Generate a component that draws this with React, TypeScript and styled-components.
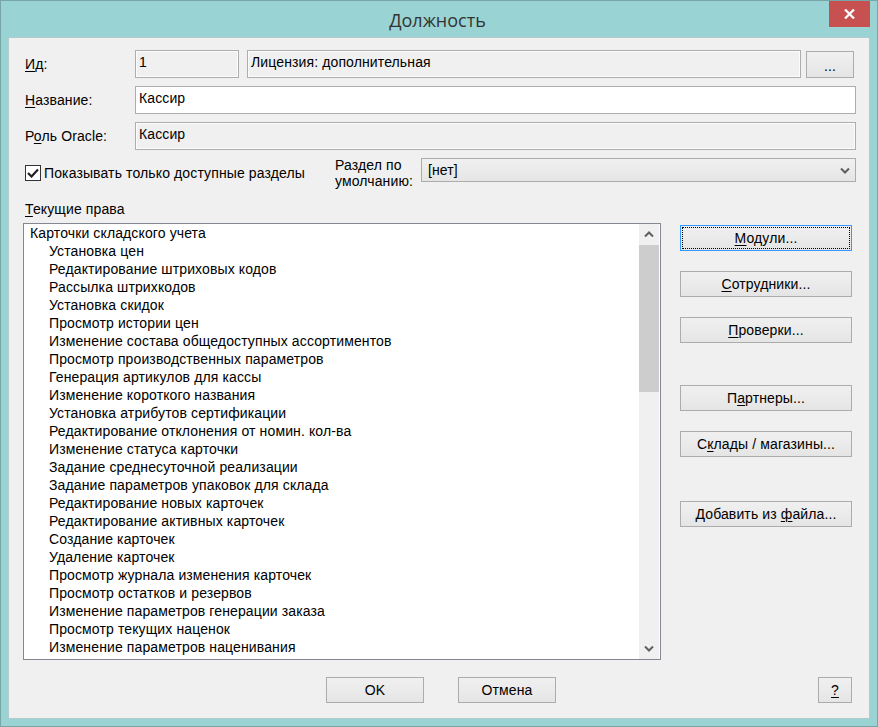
import React from 'react';
import styled, { createGlobalStyle } from 'styled-components';

const GlobalStyle = createGlobalStyle`
  html, body { margin: 0; padding: 0; }
  body {
    width: 878px; height: 727px; overflow: hidden;
    background: #99d3d4;
    font-family: "Liberation Sans", Arial, sans-serif;
    font-size: 14px; letter-spacing: 0.12px; color: #000;
  }
  * { box-sizing: border-box; }
`;

const Window = styled.div`
  width: 878px; height: 727px;
  border: 1px solid #76a6a7;
  background: #99d3d4;
  display: flex; flex-direction: column;
`;

const TitleBar = styled.div`
  height: 36px; flex: none;
  display: grid; grid-template-columns: 1fr auto 1fr;
  padding-right: 7px;
`;

const Title = styled.div`
  grid-column: 2; align-self: center;
  margin-top: 2px; margin-left: 4px;
  font-family: "Open Sans", "Noto Sans", sans-serif;
  font-size: 18px; letter-spacing: 0; color: #333;
`;

const CloseButton = styled.div`
  grid-column: 3; justify-self: end; align-self: start;
  width: 41px; height: 26px;
  background: #c75050;
  display: flex; align-items: center; justify-content: center;
`;

const Client = styled.div`
  flex: 1;
  margin: 0 7px 7px 7px;
  background: #f0f0f0;
  border: 1px solid #b3cbcc;
  padding: 12px 13px 15px 14px;
  display: flex; flex-direction: column;
`;

const FieldRow = styled.div<{ $mt?: number }>`
  display: flex; align-items: center;
  height: 28px; flex: none;
  margin-top: ${p => p.$mt ?? 0}px;
`;

const Label = styled.div<{ $w?: number }>`
  width: ${p => p.$w ?? 110}px; flex: none;
  margin-left: 2px;
  line-height: 16px;
  white-space: nowrap;
`;

const Mn = styled.u`
  text-decoration: underline;
  text-underline-offset: 2px;
  text-decoration-thickness: 1px;
`;

const Field = styled.div<{ $ro?: boolean; $w?: number; $ml?: number }>`
  height: 28px;
  ${p => (p.$w ? `width: ${p.$w}px; flex: none;` : 'flex: 1;')}
  margin-left: ${p => p.$ml ?? 0}px;
  border: 1px solid ${p => (p.$ro ? '#adadad' : '#abadb3')};
  background: ${p => (p.$ro ? '#f0f0f0' : '#fff')};
  box-shadow: inset 0 0 0 1px ${p => (p.$ro ? '#fcfcfc' : '#fff')};
  padding: 3px 3px;
  line-height: 16px;
  white-space: nowrap; overflow: hidden;
`;

const Button = styled.button<{ $w?: number; $h?: number; $focused?: boolean; $mt?: number; $ml?: number }>`
  width: ${p => p.$w ?? 172}px; height: ${p => p.$h ?? 26}px; flex: none;
  margin: ${p => p.$mt ?? 0}px 0 0 ${p => p.$ml ?? 0}px;
  padding: 0;
  border: 1px solid ${p => (p.$focused ? '#3399ff' : '#acacac')};
  background: linear-gradient(#f0f0f0, #e5e5e5);
  font-family: "Liberation Sans", Arial, sans-serif;
  font-size: 14px; letter-spacing: 0.12px; color: #000;
  line-height: 16px;
  position: relative;
  ${p =>
    p.$focused
      ? `&::after { content: ""; position: absolute; inset: 1px; border: 1px dotted #000; }`
      : ''}
`;

const DotsButton = styled(Button)`
  align-self: flex-end;
  margin-left: 5px; margin-right: 2px;
  padding-top: 3px;
`;

const OptionsRow = styled.div`
  display: flex; align-items: center;
  height: 32px; flex: none;
  margin-top: 7px;
`;

const CheckGroup = styled.label`
  width: 310px; flex: none;
  margin-left: 2px;
  display: flex; align-items: center; gap: 3px;
  line-height: 16px;
`;

const CheckBox = styled.span`
  width: 16px; height: 16px; flex: none;
  border: 1px solid #333;
  background: #fff;
  display: flex; align-items: center; justify-content: center;
`;

const TwoLineLabel = styled.div`
  width: 86px; flex: none;
  line-height: 16px;
`;

const Combo = styled.div`
  flex: 1; align-self: flex-start;
  height: 24px; margin-top: 1px;
  border: 1px solid #acacac;
  background: linear-gradient(#f0f0f0, #e5e5e5);
  display: flex; align-items: center; justify-content: space-between;
  padding: 0 5px 0 6px;
  line-height: 16px;
`;

const SectionLabel = styled.div`
  margin: 12px 0 0 2px;
  line-height: 16px; height: 16px; flex: none;
`;

const Middle = styled.div`
  display: flex; gap: 19px;
  margin-top: 6px; flex: none;
`;

const List = styled.div`
  width: 638px; height: 437px; flex: none;
  border: 1px solid #828790;
  background: #fff;
  display: flex;
`;

const Items = styled.div`
  flex: 1; overflow: hidden;
`;

const Item = styled.div<{ $child?: boolean }>`
  height: 18px; line-height: 18px;
  padding-left: ${p => (p.$child ? 25 : 6)}px;
  white-space: nowrap;
`;

const ScrollBar = styled.div`
  width: 20px; flex: none;
  margin-right: 1px;
  background: #f0f0f0;
  display: flex; flex-direction: column;
`;

const ScrollArrow = styled.div`
  height: 21px; flex: none;
  display: flex; align-items: center; justify-content: center;
`;

const Track = styled.div`
  flex: 1;
`;

const Thumb = styled.div`
  height: 147px;
  background: #cdcdcd;
`;

const SideButtons = styled.div`
  display: flex; flex-direction: column;
  margin-top: 2px;
`;

const BottomRow = styled.div`
  display: flex; height: 26px; flex: none;
  margin-top: 17px;
`;

const HelpButton = styled(Button)`
  margin-left: auto; margin-right: 4px;
`;

const Chevron = ({ up }: { up?: boolean }) => (
  <svg width="10" height="7" viewBox="0 0 10 7">
    <polyline
      points={up ? '1,5.5 5,1.5 9,5.5' : '1,1.5 5,5.5 9,1.5'}
      fill="none"
      stroke="#606060"
      strokeWidth="2"
    />
  </svg>
);

const items: { t: string; child?: boolean }[] = [
  { t: 'Карточки складского учета' },
  { t: 'Установка цен', child: true },
  { t: 'Редактирование штриховых кодов', child: true },
  { t: 'Рассылка штрихкодов', child: true },
  { t: 'Установка скидок', child: true },
  { t: 'Просмотр истории цен', child: true },
  { t: 'Изменение состава общедоступных ассортиментов', child: true },
  { t: 'Просмотр производственных параметров', child: true },
  { t: 'Генерация артикулов для кассы', child: true },
  { t: 'Изменение короткого названия', child: true },
  { t: 'Установка атрибутов сертификации', child: true },
  { t: 'Редактирование отклонения от номин. кол-ва', child: true },
  { t: 'Изменение статуса карточки', child: true },
  { t: 'Задание среднесуточной реализации', child: true },
  { t: 'Задание параметров упаковок для склада', child: true },
  { t: 'Редактирование новых карточек', child: true },
  { t: 'Редактирование активных карточек', child: true },
  { t: 'Создание карточек', child: true },
  { t: 'Удаление карточек', child: true },
  { t: 'Просмотр журнала изменения карточек', child: true },
  { t: 'Просмотр остатков и резервов', child: true },
  { t: 'Изменение параметров генерации заказа', child: true },
  { t: 'Просмотр текущих наценок', child: true },
  { t: 'Изменение параметров наценивания', child: true },
];

export default function App() {
  return (
    <>
      <GlobalStyle />
      <Window>
        <TitleBar>
          <Title>Должность</Title>
          <CloseButton>
            <svg width="11" height="10" viewBox="0 0 11 10">
              <line x1="1" y1="0.5" x2="10" y2="9.5" stroke="#fff" strokeWidth="2.3" />
              <line x1="10" y1="0.5" x2="1" y2="9.5" stroke="#fff" strokeWidth="2.3" />
            </svg>
          </CloseButton>
        </TitleBar>
        <Client>
          <FieldRow>
            <Label><Mn>И</Mn>д:</Label>
            <Field $ro $w={104}>1</Field>
            <Field $ro $ml={8}>Лицензия: дополнительная</Field>
            <DotsButton $w={48} $h={27}>...</DotsButton>
          </FieldRow>
          <FieldRow $mt={8}>
            <Label><Mn>Н</Mn>азвание:</Label>
            <Field>Кассир</Field>
          </FieldRow>
          <FieldRow $mt={8}>
            <Label>Р<Mn>о</Mn>ль Oracle:</Label>
            <Field $ro>Кассир</Field>
          </FieldRow>
          <OptionsRow>
            <CheckGroup>
              <CheckBox>
                <svg width="12" height="10" viewBox="0 0 12 10">
                  <polyline points="1,5 4.5,8.5 11,1.5" fill="none" stroke="#222" strokeWidth="2.2" />
                </svg>
              </CheckBox>
              Показывать только доступные разделы
            </CheckGroup>
            <TwoLineLabel>
              Раздел по
              <br />
              умолчанию:
            </TwoLineLabel>
            <Combo>
              <span>[нет]</span>
              <Chevron />
            </Combo>
          </OptionsRow>
          <SectionLabel><Mn>Т</Mn>екущие права</SectionLabel>
          <Middle>
            <List>
              <Items>
                {items.map((it, i) => (
                  <Item key={i} $child={it.child}>{it.t}</Item>
                ))}
              </Items>
              <ScrollBar>
                <ScrollArrow><Chevron up /></ScrollArrow>
                <Track><Thumb /></Track>
                <ScrollArrow><Chevron /></ScrollArrow>
              </ScrollBar>
            </List>
            <SideButtons>
              <Button $focused><Mn>М</Mn>одули...</Button>
              <Button $mt={20}><Mn>С</Mn>отрудники...</Button>
              <Button $mt={20}><Mn>П</Mn>роверки...</Button>
              <Button $mt={42}>П<Mn>а</Mn>ртнеры...</Button>
              <Button $mt={20}>С<Mn>к</Mn>лады / магазины...</Button>
              <Button $mt={44}>Добавить из <Mn>ф</Mn>айла...</Button>
            </SideButtons>
          </Middle>
          <BottomRow>
            <Button $w={98} $ml={303}>OK</Button>
            <Button $w={98} $ml={34}>Отмена</Button>
            <HelpButton $w={34}><Mn>?</Mn></HelpButton>
          </BottomRow>
        </Client>
      </Window>
    </>
  );
}
